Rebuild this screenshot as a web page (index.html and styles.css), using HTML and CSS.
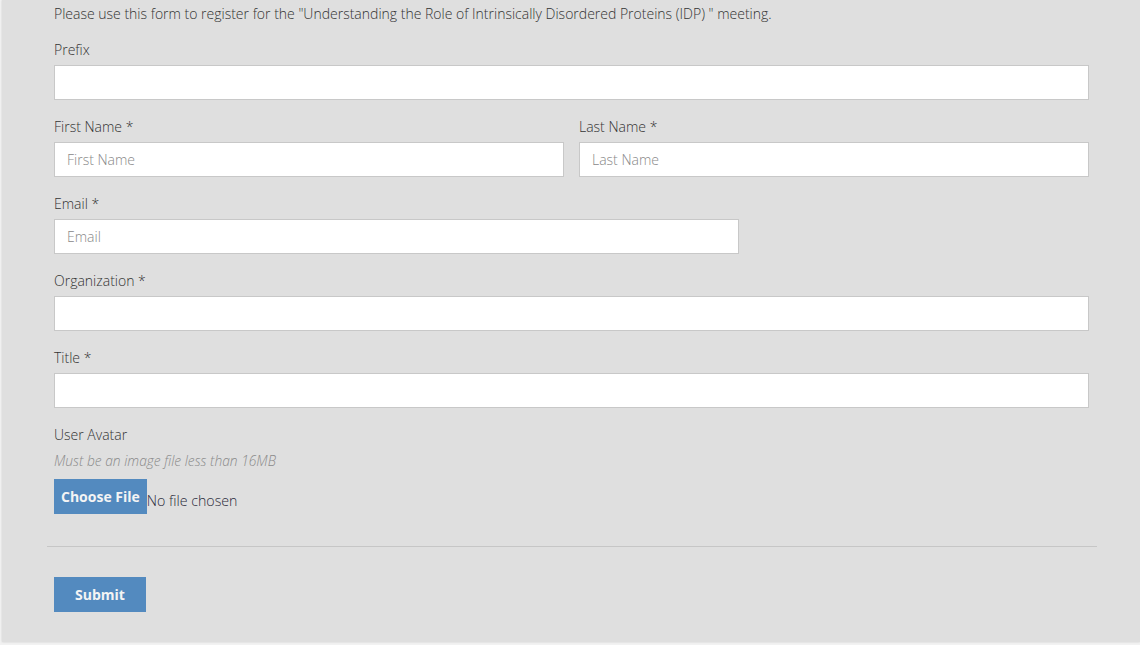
FILE: index.html
```html
<!DOCTYPE html>
<html>
<head>
<meta charset="utf-8">
<link rel="stylesheet" href="styles.css">
</head>
<body>
<div class="panel">
  <form class="form">
    <p class="intro">Please use this form to register for the "Understanding the Role of Intrinsically Disordered Proteins (IDP) " meeting.</p>
    <div class="group">
      <label class="label">Prefix</label>
      <input class="input" type="text">
    </div>
    <div class="row">
      <div class="group col-half">
        <label class="label">First Name *</label>
        <input class="input" type="text" placeholder="First Name">
      </div>
      <div class="group col-half">
        <label class="label">Last Name *</label>
        <input class="input" type="text" placeholder="Last Name">
      </div>
    </div>
    <div class="group col-email">
      <label class="label">Email *</label>
      <input class="input" type="text" placeholder="Email">
    </div>
    <div class="group">
      <label class="label">Organization *</label>
      <input class="input" type="text">
    </div>
    <div class="group">
      <label class="label">Title *</label>
      <input class="input" type="text">
    </div>
    <div class="avatar">
      <label class="label">User Avatar</label>
      <p class="help">Must be an image file less than 16MB</p>
      <div class="file">
        <span class="btn">Choose File</span>
        <span class="file-text">No file chosen</span>
      </div>
    </div>
    <hr class="divider">
    <div class="actions">
      <span class="btn submit">Submit</span>
    </div>
  </form>
</div>
</body>
</html>
```
FILE: styles.css
```css
* { box-sizing: border-box; }
html, body { margin: 0; padding: 0; }
body {
  background: #f2f2f2;
  font-family: "Open Sans", "Liberation Sans", sans-serif;
  font-size: 14px;
  font-weight: 300;
  color: #333;
  height: 645px;
  overflow: hidden;
}
.panel {
  margin-left: 2px;
  background: #dfdfdf;
  height: 642px;
  box-shadow: 0 0 2px rgba(0,0,0,0.15);
  padding: 4px 43px 0 45px;
}
.form {
  display: flex;
  flex-direction: column;
}
.intro {
  margin: 0 0 16px 7px;
  line-height: 20px;
}
.group {
  display: flex;
  flex-direction: column;
  margin: 0 0 17px 7px;
  width: 1035px;
}
.label {
  line-height: 20px;
  margin-bottom: 5px;
}
.input {
  height: 35px;
  border: 1px solid #c8c8c8;
  background: #fff;
  font-family: inherit;
  font-size: 14px;
  font-weight: 300;
  padding: 0 12px;
  color: #555;
  outline: none;
}
.input::placeholder { color: #888; }
.row {
  display: flex;
  gap: 15px;
  margin-left: 7px;
}
.row .group { margin-left: 0; width: 510px; }
.col-email { width: 685px; }
.avatar {
  display: flex;
  flex-direction: column;
  margin-left: 7px;
}
.avatar .label { margin-bottom: 6px; }
.help {
  margin: 0 0 8px;
  line-height: 20px;
  font-style: italic;
  font-size: 13.8px;
  color: #8a8a8a;
}
.file {
  display: flex;
  align-items: center;
}
.btn {
  display: inline-flex;
  align-items: center;
  justify-content: center;
  background: #538abf;
  color: #f4f4f4;
  font-weight: 700;
  height: 35px;
  padding: 0 7px;
  font-size: 14px;
}
.file-text {
  padding-top: 7px;
  color: #2a2a3a;
  font-weight: 300;
  font-size: 14.2px;
}
.divider {
  border: 0;
  border-top: 1px solid #c6c6c6;
  margin: 32px 0 30px 0;
  width: 1050px;
}
.actions { margin-left: 7px; }
.submit { width: 92px; }
```
